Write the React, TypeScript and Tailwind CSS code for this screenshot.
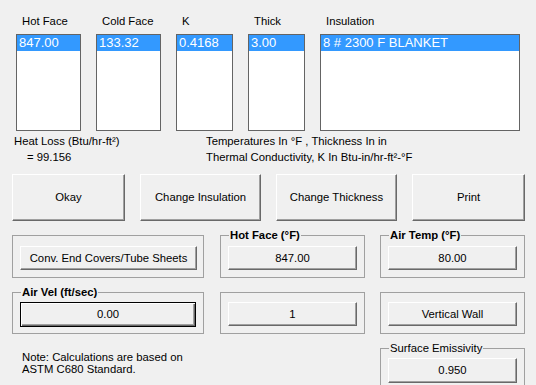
import React from 'react';

const btn =
  'flex items-center justify-center bg-[#f0f0f0] text-black border-t border-l border-white border-b border-r border-b-[#696969] border-r-[#696969] shadow-[inset_-1px_-1px_0_#a0a0a0]';

const lists = [
  { label: 'Hot Face', value: '847.00', w: 'w-[65px]' },
  { label: 'Cold Face', value: '133.32', w: 'w-[65px]' },
  { label: 'K', value: '0.4168', w: 'w-[57px]' },
  { label: 'Thick', value: '3.00', w: 'w-[57px]' },
  { label: 'Insulation', value: '8 # 2300 F BLANKET', w: 'w-[200px]' },
];

const Group: React.FC<{ label?: string; bold?: boolean; className: string; children: React.ReactNode }> = ({
  label,
  bold = true,
  className,
  children,
}) => (
  <div className={`relative border border-[#a0a0a0] ${className}`}>
    {label && (
      <span
        className={`absolute top-[-7px] left-[8px] px-[1px] bg-[#f0f0f0] leading-[13px] ${bold ? 'font-bold' : ''}`}
      >
        {label}
      </span>
    )}
    {children}
  </div>
);

export default function App() {
  return (
    <div
      className="w-[536px] h-[385px] overflow-hidden bg-[#f0f0f0] text-[11.3px] text-black flex flex-col"
      style={{ fontFamily: '"Liberation Sans", Arial, sans-serif' }}
    >
      {/* List boxes */}
      <div className="flex gap-[15px] pl-[16px] pt-[15px]">
        {lists.map((l) => (
          <div key={l.label} className="flex flex-col">
            <span className="pl-[6px] h-[13px] leading-[13px]">{l.label}</span>
            <div className={`${l.w} h-[97px] mt-[6px] border border-[#646464] bg-white`}>
              <div className="h-[16px] bg-[#3399ff] text-white text-[13px] leading-[16px] pl-[2px] whitespace-nowrap">
                {l.value}
              </div>
            </div>
          </div>
        ))}
      </div>

      {/* Info text */}
      <div className="flex mt-[2px] leading-[16px]">
        <div className="w-[206px] pl-[14px]">
          <div>Heat Loss (Btu/hr-ft²)</div>
          <div className="pl-[13px]">= 99.156</div>
        </div>
        <div>
          <div>Temperatures In °F , Thickness In in</div>
          <div>Thermal Conductivity, K In Btu-in/hr-ft²-°F</div>
        </div>
      </div>

      {/* Action buttons */}
      <div className="flex gap-[15px] pl-[12px] mt-[9px]">
        <button className={`${btn} w-[113px] h-[47px]`}>Okay</button>
        <button className={`${btn} w-[121px] h-[47px]`}>Change Insulation</button>
        <button className={`${btn} w-[121px] h-[47px]`}>Change Thickness</button>
        <button className={`${btn} w-[113px] h-[47px]`}>Print</button>
      </div>

      {/* Group row 1 */}
      <div className="flex pl-[12px] mt-[14px]">
        <Group className="w-[192px] h-[43px] pt-[10px] pl-[7px]">
          <button className={`${btn} w-[177px] h-[24px]`}>Conv. End Covers/Tube Sheets</button>
        </Group>
        <Group label="Hot Face (°F)" className="ml-[16px] w-[145px] h-[43px] pt-[10px] pl-[7px]">
          <button className={`${btn} w-[129px] h-[24px]`}>847.00</button>
        </Group>
        <Group label="Air Temp (°F)" className="ml-[15px] w-[145px] h-[43px] pt-[10px] pl-[7px]">
          <button className={`${btn} w-[129px] h-[24px]`}>80.00</button>
        </Group>
      </div>

      {/* Group row 2 */}
      <div className="flex pl-[12px] mt-[14px]">
        <Group label="Air Vel (ft/sec)" className="w-[192px] h-[42px] pt-[9px] pl-[7px]">
          <button className="flex items-center justify-center w-[176px] h-[25px] bg-[#f0f0f0] border border-black shadow-[inset_1px_1px_0_#fff,inset_-1px_-1px_0_#696969,inset_-2px_-2px_0_#a0a0a0]">
            0.00
          </button>
        </Group>
        <Group className="ml-[16px] w-[145px] h-[42px] pt-[9px] pl-[7px]">
          <button className={`${btn} w-[129px] h-[24px]`}>1</button>
        </Group>
        <Group className="ml-[15px] w-[145px] h-[42px] pt-[9px] pl-[7px]">
          <button className={`${btn} w-[129px] h-[24px]`}>Vertical Wall</button>
        </Group>
      </div>

      {/* Note + emissivity */}
      <div className="flex mt-[14px]">
        <div className="w-[380px] pl-[22px] pt-[3px] leading-[12px]">
          <div>Note: Calculations are based on</div>
          <div>ASTM C680 Standard.</div>
        </div>
        <Group label="Surface Emissivity" bold={false} className="w-[145px] h-[50px] pt-[9px] pl-[7px]">
          <button className={`${btn} w-[129px] h-[25px]`}>0.950</button>
        </Group>
      </div>
    </div>
  );
}
